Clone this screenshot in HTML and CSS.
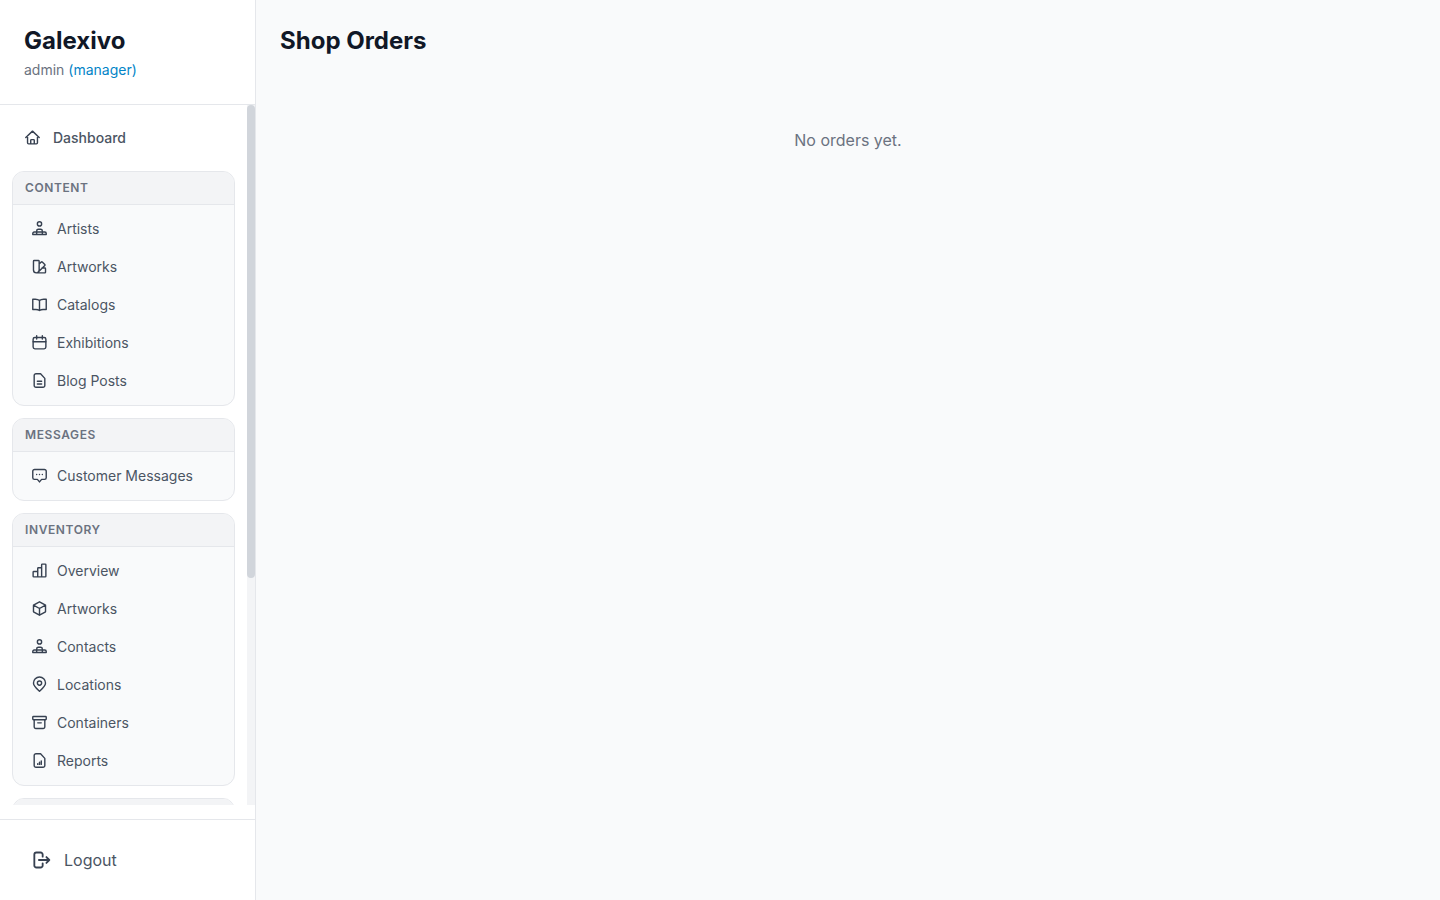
FILE: index.html
```html
<!DOCTYPE html>
<html lang="en">
<head>
    <meta charset="UTF-8">
    <meta name="viewport" content="width=device-width, initial-scale=1.0">
    <title>Shop Orders</title>
    <link rel="stylesheet" href="styles.css">
</head>
<body>
    <aside class="sidebar">
        <div class="brand">
            <h2>Galexivo</h2>
            <p>admin <span class="role">(manager)</span></p>
        </div>

        <div class="nav-wrap">
            <nav class="nav">
                <a class="nav-top" href="#">
                    <svg class="icon" viewBox="0 0 24 24"><path d="M2.500 12 12 3l9.500 9M5 9.500v10a1.500 1.500 0 0 0 1.500 1.500h11a1.500 1.500 0 0 0 1.500-1.500v-10M9.500 21v-5a1 1 0 0 1 1-1h3a1 1 0 0 1 1 1v5"/></svg>
                    Dashboard
                </a>

                <section class="group">
                    <h3 class="group-title">Content</h3>
                    <ul>
                        <li><a href="#"><svg class="icon" viewBox="0 0 24 24"><circle cx="12" cy="5.500" r="3"/><path d="M2.500 20.500v-1.500A2 2 0 0 1 4.500 17h15a2 2 0 0 1 2 2v1.500zM8 17v-1.500a2.500 2.500 0 0 1 2.500-2.500h3a2.500 2.500 0 0 1 2.500 2.500V17M8 17v3.500M16 17v3.500"/></svg>Artists</a></li>
                        <li><a href="#"><svg class="icon" viewBox="0 0 24 24"><path d="M7.500 21A4 4 0 0 1 3.500 17V4.500a1 1 0 0 1 1-1h6a1 1 0 0 1 1 1V17a4 4 0 0 1-4 4h12a1 1 0 0 0 1-1v-5a1 1 0 0 0-1-1h-4M11.500 8.500l3-3a1 1 0 0 1 1.400 0l3.600 3.600a1 1 0 0 1 0 1.400L11 19"/></svg>Artworks</a></li>
                        <li><a href="#"><svg class="icon" viewBox="0 0 24 24"><path d="M12 6.500C10.500 5 8.500 4.500 6 4.500H2.500v14.500H7c2 0 3.500.5 5 1.500 1.500-1 3-1.500 5-1.500h4.500V4.500H18c-2.500 0-4.500.5-6 2zM12 6.500v14"/></svg>Catalogs</a></li>
                        <li><a href="#"><svg class="icon" viewBox="0 0 24 24"><rect x="3" y="5" width="18" height="16" rx="2.500"/><path d="M8 2.500V7M16 2.500V7M3 11h18"/></svg>Exhibitions</a></li>
                        <li><a href="#"><svg class="icon" viewBox="0 0 24 24"><path d="M4.500 5A2.500 2.500 0 0 1 7 2.500h6.500L19.500 9v10a2.500 2.500 0 0 1-2.500 2.500H7A2.500 2.500 0 0 1 4.500 19zM9 13h6M9 17h6"/></svg>Blog Posts</a></li>
                    </ul>
                </section>

                <section class="group">
                    <h3 class="group-title">Messages</h3>
                    <ul>
                        <li><a href="#"><svg class="icon" viewBox="0 0 24 24"><path d="M5 3.500h14A2.500 2.500 0 0 1 21.500 6v9a2.500 2.500 0 0 1-2.500 2.500h-4L12 21l-3-3.500H5A2.500 2.500 0 0 1 2.500 15V6A2.500 2.500 0 0 1 5 3.500z"/><path d="M8 10.500h.01M12 10.500h.01M16 10.500h.01"/></svg>Customer Messages</a></li>
                    </ul>
                </section>

                <section class="group">
                    <h3 class="group-title">Inventory</h3>
                    <ul>
                        <li><a href="#"><svg class="icon" viewBox="0 0 24 24"><path d="M3 14.500a1 1 0 0 1 1-1h5.500V21H4a1 1 0 0 1-1-1zM9.500 9a1 1 0 0 1 1-1h4.500v13H9.500zM15 4a1 1 0 0 1 1-1h4a1 1 0 0 1 1 1v16a1 1 0 0 1-1 1h-5z"/></svg>Overview</a></li>
                        <li><a href="#"><svg class="icon" viewBox="0 0 24 24"><path d="M12 2.500l8.500 4.800v9.400L12 21.500l-8.500-4.800V7.300zM3.500 7.300 12 12l8.500-4.700M12 12v9.500"/></svg>Artworks</a></li>
                        <li><a href="#"><svg class="icon" viewBox="0 0 24 24"><circle cx="12" cy="5.500" r="3"/><path d="M2.500 20.500v-1.500A2 2 0 0 1 4.500 17h15a2 2 0 0 1 2 2v1.500zM8 17v-1.500a2.500 2.500 0 0 1 2.500-2.500h3a2.500 2.500 0 0 1 2.500 2.500V17M8 17v3.500M16 17v3.500"/></svg>Contacts</a></li>
                        <li><a href="#"><svg class="icon" viewBox="0 0 24 24"><path d="M12 21.500c-1.500-1.500-8.500-6.500-8.500-11.500a8.500 8.500 0 0 1 17 0c0 5-7 10-8.500 11.500z"/><circle cx="12" cy="10" r="3"/></svg>Locations</a></li>
                        <li><a href="#"><svg class="icon" viewBox="0 0 24 24"><rect x="2.500" y="3.500" width="19" height="4.500" rx="1"/><path d="M4.500 8v10.500a2 2 0 0 0 2 2h11a2 2 0 0 0 2-2V8M9.500 12.500h5"/></svg>Containers</a></li>
                        <li><a href="#"><svg class="icon" viewBox="0 0 24 24"><path d="M4.500 5A2.500 2.500 0 0 1 7 2.500h6.500L19.500 9v10a2.500 2.500 0 0 1-2.500 2.500H7A2.500 2.500 0 0 1 4.500 19zM9.500 17.500v-1M12 17.500v-3M14.500 17.500v-5"/></svg>Reports</a></li>
                    </ul>
                </section>

                <section class="group">
                    <div class="group-title"></div>
                </section>
            </nav>
            <div class="scroll-track"><div class="scroll-thumb"></div></div>
        </div>

        <div class="sidebar-foot">
            <a class="logout" href="#">
                <svg class="logout-icon" viewBox="0 0 24 24"><path d="M14 8V5.500A2.500 2.500 0 0 0 11.500 3h-5A2.500 2.500 0 0 0 4 5.500v13A2.500 2.500 0 0 0 6.500 21h5a2.500 2.500 0 0 0 2.500-2.500V16M9.500 12h12.500M18.500 8.500 22 12l-3.500 3.500"/></svg>
                Logout
            </a>
        </div>
    </aside>

    <main class="main">
        <h1>Shop Orders</h1>
        <p class="empty">No orders yet.</p>
    </main>
</body>
</html>
```

FILE: styles.css
```css
* {
    box-sizing: border-box;
}

body {
    font-family: Inter, "Liberation Sans", sans-serif;
    color: #374151;
    background: #f9fafb;
    margin: 0;
    height: 100vh;
    display: flex;
    overflow: hidden;
}

a {
    color: inherit;
    text-decoration: none;
}

.sidebar {
    width: 256px;
    flex-shrink: 0;
    height: 100vh;
    display: flex;
    flex-direction: column;
    background: #ffffff;
    border-right: 1px solid #e5e7eb;
}

.brand {
    height: 105px;
    flex-shrink: 0;
    padding: 24px;
    border-bottom: 1px solid #e5e7eb;
}

.brand h2 {
    margin: 0 0 2px;
    font-size: 24px;
    line-height: 34px;
    font-weight: 700;
    color: #111827;
}

.brand p {
    margin: 0;
    font-size: 14px;
    line-height: 20px;
    color: #6b7280;
}

.role {
    color: #0284c7;
}

.nav-wrap {
    flex: 1;
    min-height: 0;
    display: flex;
}

.nav {
    flex: 1;
    min-width: 0;
    overflow: hidden;
    padding: 14px 12px;
}

.scroll-track {
    width: 8px;
    flex-shrink: 0;
    background: #f3f4f6;
}

.scroll-thumb {
    height: 473px;
    background: #d1d5db;
    border-radius: 4px;
}

.icon {
    width: 17px;
    height: 17px;
    flex-shrink: 0;
    fill: none;
    stroke: #374151;
    stroke-width: 2;
    stroke-linecap: round;
    stroke-linejoin: round;
}

.nav-top {
    display: flex;
    align-items: center;
    gap: 12px;
    height: 38px;
    padding: 0 0 1px 12px;
    margin-bottom: 14px;
    font-size: 14px;
    font-weight: 500;
    color: #4b5563;
}

.group {
    margin-bottom: 12px;
    background: #f9fafb;
    border: 1px solid #e5e7eb;
    border-radius: 12px;
    overflow: hidden;
}

.group-title {
    margin: 0;
    height: 33px;
    padding: 0 12px 2px;
    display: flex;
    align-items: center;
    font-size: 12px;
    font-weight: 600;
    letter-spacing: 0.6px;
    text-transform: uppercase;
    color: #6b7280;
    background: #f3f4f6;
    border-bottom: 1px solid #e5e7eb;
}

.group ul {
    list-style: none;
    margin: 0;
    padding: 5px 0;
}

.group li a {
    display: flex;
    align-items: center;
    gap: 9px;
    height: 38px;
    padding: 0 0 1px 18px;
    font-size: 14px;
    color: #4b5563;
}

.sidebar-foot {
    margin-top: 14px;
    height: 81px;
    flex-shrink: 0;
    padding: 16px;
    border-top: 1px solid #e5e7eb;
}

.logout {
    display: flex;
    align-items: center;
    gap: 13px;
    height: 48px;
    padding-left: 15px;
    font-size: 16px;
    color: #4b5563;
}

.logout-icon {
    width: 20px;
    height: 20px;
    fill: none;
    stroke: #374151;
    stroke-width: 2.2;
    stroke-linecap: round;
    stroke-linejoin: round;
}

.main {
    flex: 1;
    padding: 24px;
}

.main h1 {
    margin: 0 0 70px;
    font-size: 24px;
    line-height: 34px;
    font-weight: 700;
    color: #111827;
}

.empty {
    margin: 0;
    text-align: center;
    font-size: 16px;
    line-height: 24px;
    color: #6b7280;
}
```
